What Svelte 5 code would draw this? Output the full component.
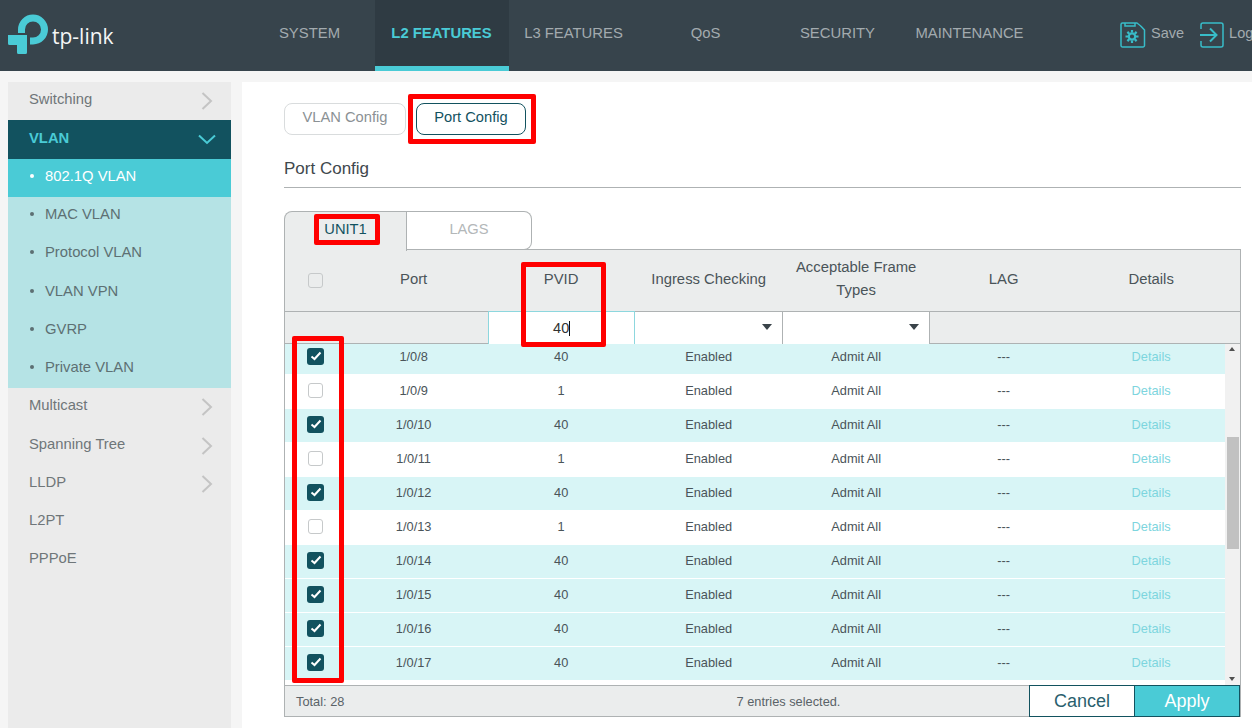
<script>
  const navItems = ["SYSTEM", "L2 FEATURES", "L3 FEATURES", "QoS", "SECURITY", "MAINTENANCE"];

  const subItems = ["802.1Q VLAN", "MAC VLAN", "Protocol VLAN", "VLAN VPN", "GVRP", "Private VLAN"];

  const lowerMenu = [
    { label: "Multicast", arrow: true },
    { label: "Spanning Tree", arrow: true },
    { label: "LLDP", arrow: true },
    { label: "L2PT", arrow: false },
    { label: "PPPoE", arrow: false },
  ];

  const rows = [
    { port: "1/0/8", pvid: 40 },
    { port: "1/0/9", pvid: 1 },
    { port: "1/0/10", pvid: 40 },
    { port: "1/0/11", pvid: 1 },
    { port: "1/0/12", pvid: 40 },
    { port: "1/0/13", pvid: 1 },
    { port: "1/0/14", pvid: 40 },
    { port: "1/0/15", pvid: 40 },
    { port: "1/0/16", pvid: 40 },
    { port: "1/0/17", pvid: 40 },
  ];
</script>

<div class="page">
  <header class="top">
    <div class="logo">
      <svg width="41" height="41" viewBox="0 0 41 41">
        <path d="M10 19 V15.500 A15 15 0 1 1 25 30.500 H22 V23.500 H25 A8 8 0 1 0 17 15.500 V19 Z" fill="#4acbd6"/>
        <path d="M0 21 H19 V38.500 A1.500 1.500 0 0 1 17.500 40 H10.500 A1.500 1.500 0 0 1 9 38.500 V31 H1.500 A1.500 1.500 0 0 1 0 29.500 Z" fill="#4acbd6"/>
      </svg>
      <span class="logoText">tp-link</span>
    </div>
    <nav class="nav">
      {#each navItems as item, i}
        <div class="navItem" class:active={i === 1}>{item}</div>
      {/each}
    </nav>
    <div class="topActions">
      <svg class="topIcon" width="26" height="26" viewBox="0 0 26 26" fill="none" stroke="#38bcc8" stroke-width="1.500">
        <path d="M2.500 1 H17 C20 3 22 5 24.500 8 V23.500 A1.500 1.500 0 0 1 23 25 H2.500 A1.500 1.500 0 0 1 1 23.500 V2.500 A1.500 1.500 0 0 1 2.500 1 Z"/>
        <path d="M5 1 V4 H15 V1"/>
        <circle cx="12" cy="14.500" r="3.200" stroke-width="2.200"/>
        <path d="M12 8 V10.500 M12 18.500 V21 M5.500 14.500 H8 M16 14.500 H18.500 M7.400 9.900 L9.200 11.700 M14.800 17.300 L16.600 19.100 M7.400 19.100 L9.200 17.300 M14.800 11.700 L16.600 9.900" stroke-width="2.200"/>
      </svg>
      <span class="topLabel saveLabel">Save</span>
      <svg class="topIcon" width="24" height="26" viewBox="0 0 24 26" fill="none" stroke="#38bcc8" stroke-width="1.500">
        <path d="M1 7 V3 A2 2 0 0 1 3 1 H21 A2 2 0 0 1 23 3 V23 A2 2 0 0 1 21 25 H3 A2 2 0 0 1 1 23 V19"/>
        <path d="M0 13 H16 M10 6.500 L16.500 13 L10 19.500" stroke-width="2"/>
      </svg>
      <span class="topLabel">Logout</span>
    </div>
  </header>

  <div class="main">
    <aside class="side">
      <div class="menuRow">
        <span>Switching</span>
        <svg class="arrow" width="12" height="18" viewBox="0 0 12 18" fill="none"><path d="M1.500 1 L10 9 L1.500 17" stroke="#c4c4c4" stroke-width="2"/></svg>
      </div>
      <div class="menuRow open">
        <span>VLAN</span>
        <svg class="chev" width="18" height="11" viewBox="0 0 18 11" fill="none"><path d="M1 1.500 L9 9 L17 1.500" stroke="#4acbd6" stroke-width="2"/></svg>
      </div>
      <div class="subMenu">
        {#each subItems as item, i}
          <div class="subRow" class:current={i === 0}><i class="dot"></i>{item}</div>
        {/each}
      </div>
      {#each lowerMenu as item}
        <div class="menuRow">
          <span>{item.label}</span>
          {#if item.arrow}
            <svg class="arrow" width="12" height="18" viewBox="0 0 12 18" fill="none"><path d="M1.500 1 L10 9 L1.500 17" stroke="#c4c4c4" stroke-width="2"/></svg>
          {/if}
        </div>
      {/each}
    </aside>

    <section class="content">
      <div class="subTabs">
        <div class="subTab">VLAN Config</div>
        <div class="subTab on">Port Config</div>
      </div>
      <h2 class="title">Port Config</h2>

      <div class="tabs">
        <div class="tab on">UNIT1</div>
        <div class="tab">LAGS</div>
      </div>

      <div class="grid">
        <div class="headRow">
          <div class="cell check"><span class="box"></span></div>
          <div class="cell">Port</div>
          <div class="cell">PVID</div>
          <div class="cell">Ingress Checking</div>
          <div class="cell frame">Acceptable Frame Types</div>
          <div class="cell">LAG</div>
          <div class="cell">Details</div>
        </div>
        <div class="filterRow">
          <div class="fCell"></div>
          <div class="fCell"></div>
          <div class="fCell input">40<i class="caret"></i></div>
          <div class="fCell select"><i class="tri"></i></div>
          <div class="fCell select"><i class="tri"></i></div>
          <div class="fCell"></div>
          <div class="fCell"></div>
        </div>

        <div class="bodyWrap">
          <div class="rows">
            {#each rows as row}
              <div class="row" class:sel={row.pvid === 40}>
                <div class="cell check">
                  {#if row.pvid === 40}
                    <span class="box checked">
                      <svg width="12" height="10" viewBox="0 0 12 10" fill="none"><path d="M1.500 5.500 L4.500 8 L10.500 1.500" stroke="#fff" stroke-width="2"/></svg>
                    </span>
                  {:else}
                    <span class="box"></span>
                  {/if}
                </div>
                <div class="cell">{row.port}</div>
                <div class="cell">{row.pvid}</div>
                <div class="cell">Enabled</div>
                <div class="cell">Admit All</div>
                <div class="cell">---</div>
                <div class="cell link">Details</div>
              </div>
            {/each}
          </div>
          <div class="scrollbar">
            <i class="up"></i>
            <i class="thumb"></i>
            <i class="down"></i>
          </div>
        </div>

        <div class="foot">
          <span class="total">Total: 28</span>
          <span class="count">7 entries selected.</span>
          <button class="btn cancel">Cancel</button>
          <button class="btn apply">Apply</button>
        </div>
      </div>
    </section>
  </div>

  <!-- red marks drawn over the screenshot -->
  <div class="mark m1"></div>
  <div class="mark m2"></div>
  <div class="mark m3"></div>
  <div class="mark m4"></div>
</div>

<style>
  :global(body) {
    margin: 0;
    background: #f5f5f5;
    font-family: "Liberation Sans", Arial, sans-serif;
    overflow: hidden;
  }

  .page {
    position: relative;
    width: 1252px;
    height: 728px;
    overflow: hidden;
    color: #4a5459;
  }

  /* HEADER */

  .top {
    height: 71px;
    background: #37444c;
    display: flex;
  }

  .logo {
    width: 243.500px;
    flex-shrink: 0;
    display: flex;
    align-items: flex-start;
    padding: 14px 0 0 8px;
    box-sizing: border-box;
  }

  .logoText {
    font-family: "Open Sans", sans-serif;
    font-size: 21px;
    color: #f4f6f6;
    margin: 8px 0 0 3px;
  }

  .nav {
    display: flex;
  }

  .navItem {
    width: 132px;
    height: 71px;
    box-sizing: border-box;
    padding-top: 25px;
    text-align: center;
    font-size: 14.850px;
    color: #a3abaf;
  }

  .navItem.active {
    background: #2f3b43;
    border-bottom: 5px solid #4acbd6;
    color: #4acbd6;
    font-weight: bold;
    width: 134px;
    margin: 0 -1px;
  }

  .topActions {
    display: flex;
    align-items: flex-start;
    margin-left: 84.500px;
    padding-top: 22px;
    white-space: nowrap;
  }

  .topIcon {
    flex-shrink: 0;
  }

  .topLabel {
    font-size: 14.500px;
    color: #a3abaf;
    margin: 3px 0 0 5px;
  }

  .saveLabel {
    margin-right: 16px;
  }

  /* SIDE MENU */

  .main {
    display: flex;
    height: 657px;
    padding: 11px 0 0 8px;
    box-sizing: border-box;
  }

  .side {
    width: 223px;
    flex-shrink: 0;
    background: #ebebeb;
    margin-right: 11px;
  }

  .menuRow {
    height: 38.250px;
    display: flex;
    align-items: center;
    justify-content: space-between;
    padding: 0 18px 3.500px 21px;
    box-sizing: border-box;
    font-size: 14.800px;
    color: #6f7679;
  }

  .menuRow .arrow {
    position: relative;
    top: 2px;
  }

  .menuRow.open {
    background: #12525f;
    color: #4acbd6;
    font-weight: bold;
    padding-right: 15px;
  }

  .chev {
    position: relative;
    top: 2px;
  }

  .subMenu {
    background: #b5e3e5;
  }

  .subRow {
    height: 38.250px;
    display: flex;
    align-items: center;
    padding: 0 0 3.500px 21px;
    box-sizing: border-box;
    font-size: 14.800px;
    color: #5d7073;
  }

  .subRow.current {
    background: #4acbd6;
    color: #fff;
  }

  .dot {
    width: 4px;
    height: 4px;
    border-radius: 50%;
    background: currentColor;
    margin: 0 11px 0 1px;
  }

  /* CONTENT */

  .content {
    flex: 1;
    background: #fff;
    padding: 21px 11px 0 42px;
    min-width: 0;
  }

  .subTabs {
    display: flex;
    gap: 10px;
  }

  .subTab {
    width: 122px;
    height: 32px;
    box-sizing: border-box;
    border: 1px solid #d9dcdd;
    border-radius: 8px;
    text-align: center;
    line-height: 26px;
    font-size: 14.700px;
    color: #8b9194;
  }

  .subTab.on {
    width: 110px;
    border-color: #12525f;
    color: #12525f;
  }

  .title {
    margin: 24px 0 0;
    height: 28px;
    font-size: 17px;
    font-weight: normal;
    line-height: 19px;
    color: #3f484d;
    border-bottom: 1px solid #aeb2b3;
  }

  .tabs {
    display: flex;
    margin-top: 23px;
    height: 39px;
  }

  .tab {
    width: 125px;
    box-sizing: border-box;
    border: 1px solid #aeb2b3;
    border-left: 0;
    border-radius: 0 8px 8px 0;
    text-align: center;
    font-size: 14.700px;
    line-height: 34px;
    color: #b3b7b9;
    background: #fff;
  }

  .tab.on {
    width: 123px;
    height: 40px;
    position: relative;
    z-index: 1;
    border-left: 1px solid #aeb2b3;
    border-right: 1px solid #aeb2b3;
    border-bottom: 0;
    border-radius: 8px 0 0 0;
    background: #ebeded;
    color: #12525f;
  }

  .grid {
    width: 957px;
    border: 1px solid #aeb2b3;
    border-top: 0;
    box-sizing: border-box;
    position: relative;
    margin-top: -1px;
  }

  .headRow,
  .filterRow,
  .row {
    display: grid;
    grid-template-columns: 55.400px repeat(6, 147.500px);
  }

  .headRow {
    height: 62px;
    padding-bottom: 4px;
    background: #ebeded;
    border-top: 1px solid #aeb2b3;
    box-sizing: border-box;
    font-size: 14.850px;
    color: #4a5459;
  }

  .cell {
    display: flex;
    align-items: center;
    justify-content: center;
    text-align: center;
    padding: 0 1px 0 0;
  }

  .frame {
    line-height: 23px;
    padding: 1px 11px 0 10px;
  }

  .check {
    padding-left: 7px;
  }

  .box {
    width: 15px;
    height: 15px;
    box-sizing: border-box;
    border: 1px solid #c6c9ca;
    border-radius: 3px;
    background: #fff;
    display: block;
  }

  .headRow .box {
    background: #ebeded;
    margin-top: 3px;
  }

  .box.checked {
    width: 17px;
    height: 17px;
    border: 0;
    border-radius: 3px;
    background: #12525f;
    display: flex;
    align-items: center;
    justify-content: center;
  }

  .filterRow {
    height: 33px;
    background: #ebeded;
    border-top: 1px solid #aeb2b3;
    border-bottom: 1px solid #aeb2b3;
    box-sizing: border-box;
  }

  .fCell.input {
    background: #fff;
    border: 1px solid #8dd7de;
    margin: -1px 0;
    text-align: center;
    font-size: 14.500px;
    line-height: 32px;
    color: #333;
  }

  .caret {
    display: inline-block;
    width: 1px;
    height: 15px;
    background: #111;
    vertical-align: -3px;
  }

  .fCell.select {
    background: #fff;
    border-right: 1px solid #aeb2b3;
    position: relative;
  }

  .tri {
    position: absolute;
    right: 10px;
    top: 12px;
    border: 5px solid transparent;
    border-top: 6px solid #3a4349;
    border-bottom: 0;
  }

  .bodyWrap {
    height: 341px;
    background: #fff;
    display: flex;
    overflow: hidden;
  }

  .rows {
    width: 940.400px;
    flex-shrink: 0;
    margin-top: -3px;
  }

  .row {
    height: 34px;
    box-sizing: border-box;
    padding-bottom: 3px;
    border-bottom: 1px solid #fff;
    font-size: 12.800px;
    color: #4a5459;
    background: #fff;
  }

  .row.sel {
    background: #d8f5f6;
  }

  .link {
    color: #7dd5de;
  }

  .scrollbar {
    flex: 1;
    background: #f1f1f1;
    position: relative;
  }

  .up,
  .down {
    position: absolute;
    left: 4px;
    border: 3.500px solid transparent;
  }

  .up {
    top: 3px;
    border-bottom: 4px solid #505050;
    border-top: 0;
  }

  .down {
    bottom: 4px;
    border-top: 4px solid #505050;
    border-bottom: 0;
  }

  .thumb {
    position: absolute;
    top: 93px;
    left: 2px;
    right: 1px;
    height: 112px;
    background: #c1c1c1;
  }

  .foot {
    height: 31px;
    box-sizing: border-box;
    background: #ebeded;
    border-top: 1px solid #aeb2b3;
    display: flex;
    align-items: flex-start;
    font-size: 12.800px;
    color: #5a6368;
  }

  .total {
    width: 263px;
    padding-left: 11px;
    box-sizing: border-box;
    line-height: 32px;
    flex-shrink: 0;
  }

  .count {
    width: 481px;
    line-height: 32px;
    flex-shrink: 0;
    text-align: center;
  }

  .btn {
    height: 32px;
    margin: -1px 0 0;
    box-sizing: border-box;
    font-family: inherit;
    font-size: 18px;
    border: 1px solid #12525f;
    padding: 0;
  }

  .cancel {
    width: 106px;
    background: #fff;
    color: #2a5f6e;
  }

  .apply {
    width: 106px;
    margin-left: -1px;
    background: #4acbd6;
    color: #fff;
  }

  /* RED MARKS */

  .mark {
    position: absolute;
    z-index: 2;
    border: 5px solid #f00;
    border-radius: 2px;
    box-sizing: border-box;
  }

  .m1 {
    left: 408px;
    top: 94px;
    width: 128px;
    height: 50px;
  }

  .m2 {
    left: 314px;
    top: 214px;
    width: 66px;
    height: 31px;
  }

  .m3 {
    left: 521px;
    top: 262px;
    width: 85px;
    height: 85px;
  }

  .m4 {
    left: 292px;
    top: 336px;
    width: 52px;
    height: 347px;
  }
</style>
